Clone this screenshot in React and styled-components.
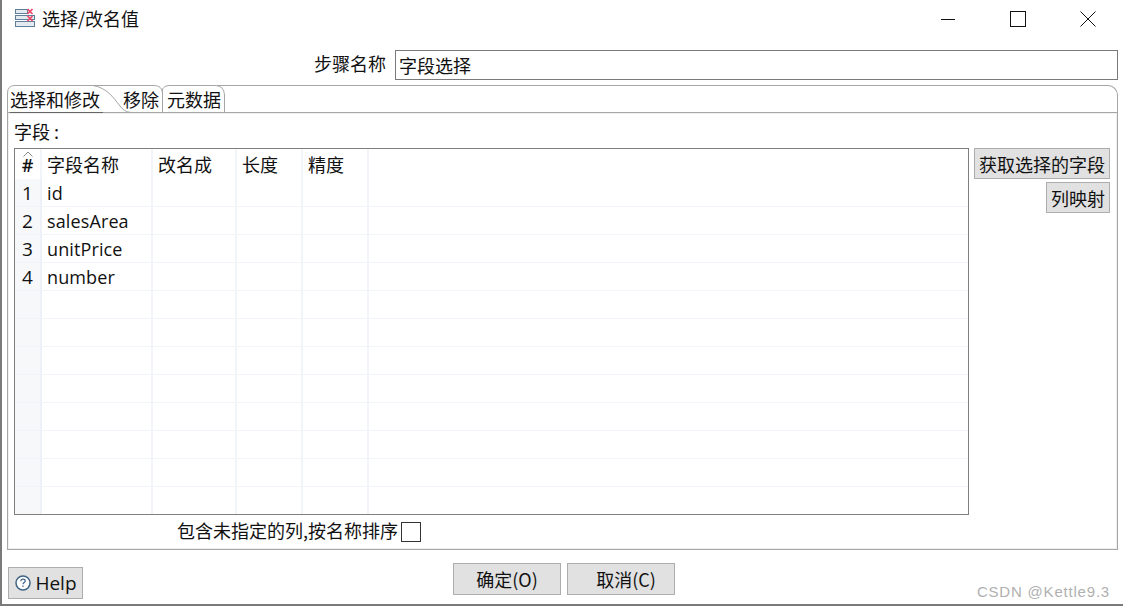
import React from 'react'
import styled, { createGlobalStyle } from 'styled-components'

const GlobalStyle = createGlobalStyle`
  html, body {
    margin: 0;
    padding: 0;
    background: #fff;
  }
  body {
    font-family: "Noto Sans CJK SC", "Liberation Sans", sans-serif;
    color: #111;
  }
`

const columns = [
  { title: '字段名称', width: 111 },
  { title: '改名成', width: 84 },
  { title: '长度', width: 66 },
  { title: '精度', width: 66 },
]

const fields = ['id', 'salesArea', 'unitPrice', 'number']
const rowNumbers = Array.from({ length: 12 }, (_, i) => i)

const App = () => {
  return (
    <>
      <GlobalStyle />
      <Window>
        <TitleBar>
          <TitleLeft>
            <AppIcon />
            <TitleText>选择/改名值</TitleText>
          </TitleLeft>
          <WindowButtons>
            <WindowButton>
              <svg width="14" height="14" viewBox="0 0 14 14">
                <path d="M0 7.5H14" stroke="#111" fill="none" />
              </svg>
            </WindowButton>
            <WindowButton>
              <svg width="16" height="16" viewBox="0 0 16 16">
                <rect x="0.5" y="0.5" width="15" height="15" stroke="#111" fill="none" />
              </svg>
            </WindowButton>
            <WindowButton>
              <svg width="16" height="16" viewBox="0 0 16 16">
                <path d="M0.5 0.5L15.5 15.5M15.5 0.5L0.5 15.5" stroke="#111" fill="none" />
              </svg>
            </WindowButton>
          </WindowButtons>
        </TitleBar>

        <StepRow>
          <StepLabel>步骤名称</StepLabel>
          <StepInput>字段选择</StepInput>
        </StepRow>

        <Folder>
          <TabBar>
            <TabOutline width="230" height="28" viewBox="0 0 230 28">
              <path
                d="M0.5 27V8Q0.5 0.5 8 0.5H147Q155 0.5 155.5 8V27M155.5 8V4Q157 0.5 162 0.5H208Q217 0.5 217.5 10V27M86 0.5C100 3 106 12 113 21C116 25 119 27 124 27.5"
                stroke="#a6a6a6"
                fill="none"
              />
              <path d="M3 27.5H96" stroke="#666" fill="none" />
            </TabOutline>
            <Tab $width={113}>选择和修改</Tab>
            <Tab $width={44}>移除</Tab>
            <Tab $width={60}>元数据</Tab>
          </TabBar>
          <FolderBody>
            <SectionLabel>字段 :</SectionLabel>
            <TableRow>
              <Table>
                <HeaderRow>
                  <NumberHead>
                    <SortCaret width="10" height="6" viewBox="0 0 10 6">
                      <path d="M0.5 5.5L5 1L9.5 5.5" stroke="#8a8a8a" fill="none" />
                    </SortCaret>
                    #
                  </NumberHead>
                  {columns.map((col) => (
                    <HeadCell key={col.title} $width={col.width}>{col.title}</HeadCell>
                  ))}
                  <FillCell />
                </HeaderRow>
                {rowNumbers.map((i) => (
                  <DataRow key={i}>
                    <NumberCell>{fields[i] ? i + 1 : ''}</NumberCell>
                    <DataCell $width={111}>{fields[i] || ''}</DataCell>
                    <DataCell $width={84} />
                    <DataCell $width={66} />
                    <DataCell $width={66} />
                    <FillCell />
                  </DataRow>
                ))}
              </Table>
              <SideButtons>
                <GrayButton $width={136} $height={31}>获取选择的字段</GrayButton>
                <GrayButton $width={64} $height={31}>列映射</GrayButton>
              </SideButtons>
            </TableRow>
            <CheckRow>
              <CheckText>包含未指定的列,按名称排序</CheckText>
              <CheckBox />
            </CheckRow>
          </FolderBody>
        </Folder>

        <Footer>
          <HelpButton>
            <svg width="16" height="16" viewBox="0 0 16 16">
              <circle cx="8" cy="8" r="7" stroke="#3f6485" strokeWidth="1.5" fill="#fff" />
              <path d="M5.8 6.2C5.9 4.9 6.8 4.2 8 4.2C9.3 4.2 10.2 5 10.2 6C10.2 7.5 8 7.5 8 9.3" stroke="#3f6485" strokeWidth="1.2" fill="none" />
              <circle cx="8" cy="11.3" r="0.8" fill="#3f6485" />
            </svg>
            Help
          </HelpButton>
          <ActionButtons>
            <GrayButton $width={108} $height={32}>确定(O)</GrayButton>
            <GrayButton $width={108} $height={32} $indent={10}>取消(C)</GrayButton>
          </ActionButtons>
          <Watermark>CSDN @Kettle9.3</Watermark>
        </Footer>
      </Window>
    </>
  )
}

const AppIcon = () => (
  <IconSvg width="21" height="20" viewBox="0 0 21 20">
    <rect x="0.5" y="1.5" width="12" height="4" fill="#e3eaf0" stroke="#5f7f9a" />
    <rect x="0.5" y="7.5" width="19" height="4" fill="#e3eaf0" stroke="#5f7f9a" />
    <rect x="0.5" y="13.5" width="19" height="5" fill="#e3eaf0" stroke="#5f7f9a" />
    <path d="M12.5 1L17.5 6M17.5 1L12.5 6M12.5 8L17.5 13M17.5 8L12.5 13" stroke="#f0456a" strokeWidth="1.7" fill="none" />
  </IconSvg>
)

export default App

const IconSvg = styled.svg`
  margin-bottom: 2px;
`

const Window = styled.div`
  box-sizing: border-box;
  width: 1123px;
  height: 606px;
  border-left: 2px solid #7a7a7a;
  border-bottom: 2px solid #7a7a7a;
  padding: 0 5px 0 5px;
  display: flex;
  flex-direction: column;
  overflow: hidden;
`

const TitleBar = styled.div`
  height: 38px;
  display: flex;
  justify-content: space-between;
  align-items: center;
`

const TitleLeft = styled.div`
  display: flex;
  align-items: center;
  gap: 6px;
  padding-left: 8px;
  font-size: 18px;
`

const TitleText = styled.span`
  line-height: 22px;
  margin-bottom: 2px;
`

const WindowButtons = styled.div`
  display: flex;
  margin-right: -5px;
`

const WindowButton = styled.div`
  width: 70px;
  height: 38px;
  display: flex;
  align-items: center;
  justify-content: center;
`

const StepRow = styled.div`
  margin-top: 12px;
  height: 30px;
  display: flex;
  align-items: center;
  justify-content: flex-end;
  gap: 9px;
  font-size: 18px;
`

const StepLabel = styled.span`
  position: relative;
  top: -2px;
`

const StepInput = styled.div`
  box-sizing: border-box;
  width: 723px;
  height: 30px;
  border: 1px solid #7a7a7a;
  padding: 0 3px;
  line-height: 29px;
  font-size: 18px;
`

const Folder = styled.div`
  margin-top: 5px;
  width: 1111px;
  height: 465px;
  display: flex;
  flex-direction: column;
`

const TabBar = styled.div`
  position: relative;
  box-sizing: border-box;
  height: 27px;
  display: flex;
  border-top: 1px solid transparent;
  padding-left: 3px;
  font-size: 18px;
  &::before {
    content: '';
    position: absolute;
    top: -1px;
    left: 210px;
    right: 0;
    height: 26px;
    border: 1px solid #a6a6a6;
    border-left: none;
    border-bottom: none;
    border-top-right-radius: 10px;
  }
`

const TabOutline = styled.svg`
  position: absolute;
  left: 0;
  top: -1px;
`

const Tab = styled.div`
  position: relative;
  width: ${(p) => p.$width}px;
  line-height: 27px;
  height: 27px;
  white-space: nowrap;
  box-sizing: border-box;
`

const FolderBody = styled.div`
  box-sizing: border-box;
  flex: 1;
  border: 1px solid #a6a6a6;
  box-shadow: inset 0 0 0 1px #f0f0f0;
  padding: 7px 6px 0 6px;
  display: flex;
  flex-direction: column;
`

const SectionLabel = styled.div`
  height: 28px;
  line-height: 22px;
  font-size: 18px;
`

const TableRow = styled.div`
  display: flex;
  align-items: flex-start;
  gap: 5px;
`

const Table = styled.div`
  box-sizing: border-box;
  width: 955px;
  height: 367px;
  border: 1px solid #7f7f7f;
  overflow: hidden;
`

const HeaderRow = styled.div`
  display: flex;
  height: 30px;
`

const DataRow = styled.div`
  display: flex;
  height: 28px;
`

const NumberHead = styled.div`
  position: relative;
  width: 27px;
  flex: none;
  box-sizing: border-box;
  padding-top: 2px;
  text-align: center;
  font-family: "Open Sans", "Liberation Sans", sans-serif;
  font-size: 18px;
  font-weight: 600;
  line-height: 28px;
  border-right: 2px solid #f1f4f8;
`

const SortCaret = styled.svg`
  position: absolute;
  top: 2px;
  left: 8px;
`

const HeadCell = styled.div`
  box-sizing: border-box;
  width: ${(p) => p.$width}px;
  flex: none;
  padding-left: 5px;
  font-size: 18px;
  line-height: 30px;
  border-right: 2px solid #f1f4f8;
`

const NumberCell = styled.div`
  box-sizing: border-box;
  width: 27px;
  flex: none;
  padding-top: 1px;
  text-align: center;
  background: #f7f8f9;
  border-right: 2px solid #eef2f8;
  border-bottom: 1px solid #f1f4f8;
  font-size: 19px;
  line-height: 27px;
  font-family: "Open Sans", "Liberation Sans", sans-serif;
`

const DataCell = styled.div`
  box-sizing: border-box;
  width: ${(p) => p.$width}px;
  flex: none;
  padding: 1px 0 0 5px;
  font-size: 18px;
  letter-spacing: 0.12px;
  line-height: 27px;
  font-family: "Open Sans", "Liberation Sans", sans-serif;
  border-right: 2px solid #f1f4f8;
  border-bottom: 1px solid #f1f4f8;
`

const FillCell = styled.div`
  flex: 1;
  border-bottom: 1px solid #f1f4f8;
  ${HeaderRow} & {
    border-bottom: none;
  }
`

const SideButtons = styled.div`
  flex: 1;
  padding-right: 1px;
  display: flex;
  flex-direction: column;
  align-items: flex-end;
  gap: 3px;
`

const GrayButton = styled.div`
  box-sizing: border-box;
  width: ${(p) => p.$width}px;
  height: ${(p) => p.$height}px;
  flex: none;
  padding-left: ${(p) => p.$indent || 0}px;
  background: #e1e1e1;
  border: 1px solid #adadad;
  display: flex;
  align-items: center;
  justify-content: center;
  font-size: 18px;
  white-space: nowrap;
`

const CheckRow = styled.div`
  margin-top: 7px;
  padding-left: 163px;
  display: flex;
  align-items: center;
  gap: 3px;
  font-size: 18px;
  height: 19px;
`

const CheckText = styled.span`
  line-height: 20px;
  margin-bottom: 3px;
`

const CheckBox = styled.div`
  box-sizing: border-box;
  width: 20px;
  height: 20px;
  border: 1px solid #333;
  background: #fff;
`

const Footer = styled.div`
  position: relative;
  flex: 1;
  display: flex;
`

const HelpButton = styled.div`
  box-sizing: border-box;
  margin-top: 17px;
  margin-left: 1px;
  padding-left: 1px;
  width: 75px;
  height: 32px;
  background: #e1e1e1;
  border: 1px solid #adadad;
  display: flex;
  align-items: center;
  justify-content: center;
  gap: 4px;
  font-size: 19px;
  font-family: "Open Sans", "Liberation Sans", sans-serif;
`

const ActionButtons = styled.div`
  margin-top: 13px;
  margin-left: 370px;
  display: flex;
  gap: 6px;
`

const Watermark = styled.div`
  position: absolute;
  right: 8px;
  bottom: 4px;
  font-family: "Liberation Sans", sans-serif;
  font-size: 15px;
  letter-spacing: 0.8px;
  color: #b0b0b0;
`
